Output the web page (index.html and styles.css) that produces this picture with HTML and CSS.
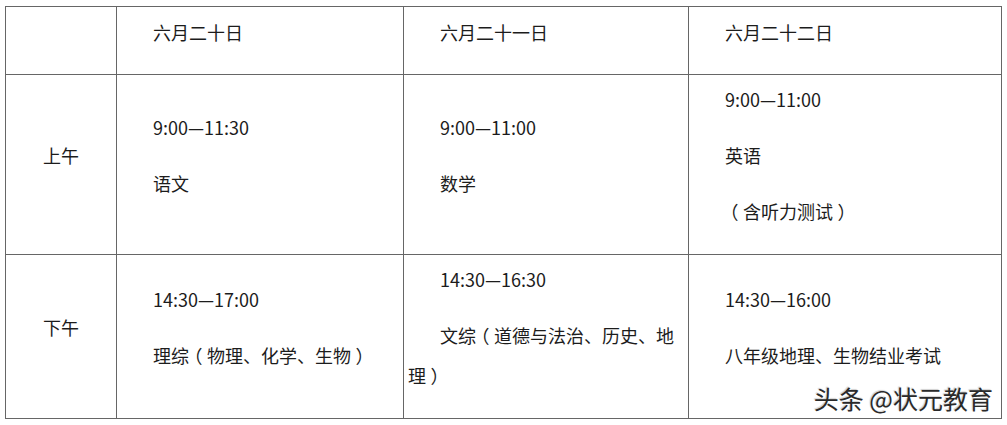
FILE: index.html
```html
<!DOCTYPE html>
<html lang="zh-CN">
<head>
<meta charset="utf-8">
<title>考试时间安排</title>
<link rel="stylesheet" href="styles.css">
</head>
<body>
<div class="wrap">
<table class="sched">
  <colgroup>
    <col class="c1"><col class="c2"><col class="c3"><col class="c4">
  </colgroup>
  <tr class="head">
    <td></td>
    <td><p>六月二十日</p></td>
    <td><p>六月二十一日</p></td>
    <td><p>六月二十二日</p></td>
  </tr>
  <tr class="am">
    <td class="label"><p>上午</p></td>
    <td><p>9:00—11:30</p><p>语文</p></td>
    <td><p>9:00—11:00</p><p>数学</p></td>
    <td><p>9:00—11:00</p><p>英语</p><p><span class="pn">（</span>含听力测试<span class="pn">）</span></p></td>
  </tr>
  <tr class="pm">
    <td class="label"><p>下午</p></td>
    <td><p>14:30—17:00</p><p>理综<span class="pn">（</span>物理、化学、生物<span class="pn">）</span></p></td>
    <td><p>14:30—16:30</p><p>文综<span class="pn">（</span>道德与法治、历史、地理<span class="pn">）</span></p></td>
    <td><p>14:30—16:00</p><p>八年级地理、生物结业考试</p></td>
  </tr>
</table>
<div class="mark">头条 @状元教育</div>
</div>
</body>
</html>
```
FILE: styles.css
```css
html, body {
  margin: 0;
  padding: 0;
  background: #ffffff;
}
.wrap {
  position: relative;
  padding: 6px 0 0 5px;
  width: 1002px;
  height: 419px;
  box-sizing: border-box;
}
.sched {
  border-collapse: collapse;
  table-layout: fixed;
  width: 996px;
  font-family: "Noto Sans CJK SC", "Microsoft YaHei", sans-serif;
  font-size: 18px;
  color: #1c1c1c;
}
.c1 { width: 111px; }
.c2 { width: 287px; }
.c3 { width: 285px; }
.c4 { width: 313px; }
.sched td {
  border: 1px solid #666;
  padding: 3px 4px 7px;
  vertical-align: middle;
}
.sched p {
  margin: 0 0 16px;
  line-height: 40px;
  text-indent: 32px;
}
.sched td.label p {
  text-indent: 0;
  text-align: center;
}
.pn {
  font-feature-settings: "halt";
  margin: 0 4.5px;
}
.head td {
  height: 57px;
  padding-top: 4px;
  padding-bottom: 6px;
}
.am td { height: 169px; }
.pm td { height: 153px; }
.mark {
  position: absolute;
  right: 9px;
  top: 381px;
  font-family: "Noto Sans CJK SC", sans-serif;
  font-size: 25px;
  line-height: 34px;
  color: #2a2a2a;
  text-shadow: 1px 1px 1px #ffffff, -1px -1px 1px #cfcfcf;
}
```
